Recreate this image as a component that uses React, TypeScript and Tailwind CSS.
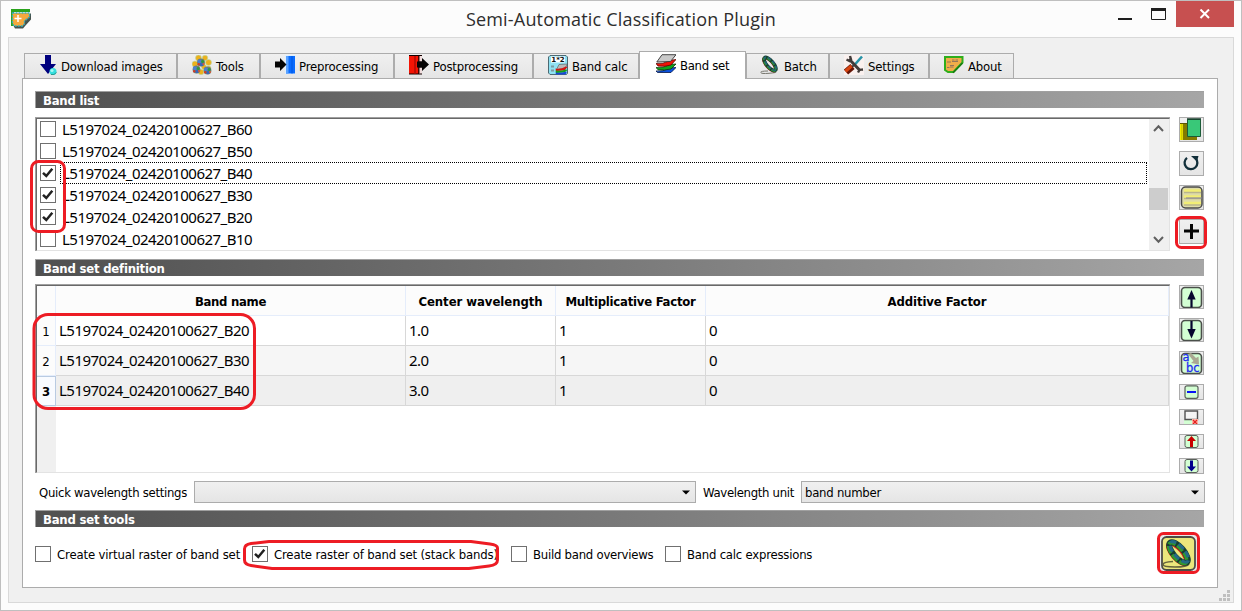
import type { ReactNode } from "react";

const ui = "font-['DejaVu_Sans_Condensed','DejaVu_Sans',sans-serif] text-[13px] leading-[16px] whitespace-nowrap";
const seg = "font-['Noto_Sans','Open_Sans',sans-serif] text-[15px] leading-[20px] tracking-[-0.52px] whitespace-nowrap";

function Svg({ w = 20, h = 20, children }: { w?: number; h?: number; children: ReactNode }) {
  return (
    <svg width={w} height={h} viewBox={`0 0 ${w} ${h}`} className="block shrink-0">
      {children}
    </svg>
  );
}

/* ---------- tab icons ---------- */

const AppIcon = () => (
  <Svg w={21} h={21}>
    <path d="M2 16l2 3.500h8l2.500-3 5.500-6V4l-8 8z" fill="#46524d" />
    <path d="M0 0h19v3H3v14H0z" fill="#2aa31c" />
    <path d="M1.500 4h17v4l-5 4v3l-2 2H3l-1.500-3z" fill="#f5a83c" stroke="#35aebb" strokeWidth="1.300" strokeDasharray="2 1" />
    <path d="M7 6v7M3.500 9.500h7" stroke="#fff" strokeWidth="1.500" />
  </Svg>
);

const DownloadIcon = () => (
  <Svg>
    <path d="M5 0h6v9h5l-8 10-8-10h5z" fill="#00007e" />
    <circle cx="13" cy="16.500" r="3.500" fill="#35dede" />
    <circle cx="12" cy="15.500" r="1.600" fill="#a5f8f2" />
    <path d="M11 19.500q3 1 5.500-2" stroke="#2a9a90" fill="none" />
  </Svg>
);

const Flower = ({ x, y }: { x: number; y: number }) => (
  <g transform={`translate(${x} ${y})`}>
    <circle r="3.900" fill="#6d7f70" />
    <circle cx="-1.500" cy="-1.300" r="2" fill="#4b7fd0" />
    <circle cx="1.600" cy="-1" r="1.500" fill="#2d9a3d" />
    <circle cx=".5" cy="2" r="1.800" fill="#3467be" />
    <circle cx="-2.300" cy="1.800" r="1.200" fill="#d23a28" />
    <circle cx="2.500" cy="1.500" r="1.100" fill="#d85a38" />
  </g>
);

const ToolsIcon = () => (
  <Svg>
    <g fill="#ecb11c" stroke="#b9dcb2" strokeWidth=".6">
      <circle cx="6.500" cy="3" r="3" />
      <circle cx="13" cy="3" r="2.800" />
      <circle cx="3" cy="9" r="3" />
      <circle cx="16.500" cy="7.500" r="3" />
      <circle cx="9" cy="17" r="2.800" />
      <circle cx="12" cy="12" r="2.500" />
      <circle cx="17" cy="13" r="2" />
    </g>
    <Flower x={9} y={7.500} />
    <Flower x={4.500} y={14.500} />
    <Flower x={15.500} y={15.500} />
  </Svg>
);

const PreIcon = () => (
  <Svg>
    <path d="M10 0h10v19H10z" fill="#dff0ff" />
    <path d="M11 1h9v17.500h-9z" fill="#0a6cff" />
    <path d="M11 1h2.500v17.500H11z" fill="#5aa2ff" />
    <path d="M16.500 1h1v17.500h-1z" fill="#0056e0" />
    <path d="M0 6.500h5V3l6.500 6.500L5 16v-3.500H0z" fill="#050505" />
  </Svg>
);

const PostIcon = () => (
  <Svg>
    <path d="M0 0h13v19.500H0z" fill="#120000" />
    <path d="M0 1h9v17.500H0z" fill="#f41404" />
    <path d="M5 1h2v17.500H5z" fill="#c20d04" />
    <path d="M10 1h3v5.500h-3zM10 12.500h3v6h-3z" fill="#f0dcdc" />
    <path d="M9 1h1.500v17.500H9z" fill="#4b0400" />
    <path d="M8 6.500h5V3l7 6.500-7 6.500v-3.500H8z" fill="#050505" />
  </Svg>
);

const CalcIcon = () => (
  <Svg>
    <path d="M2 .5h16l1.500 1.500v16.500l-1 1H2L.5 18V2z" fill="#8fe2f3" stroke="#4c6a73" />
    <path d="M3 1.500h14v6H3z" fill="#fff" />
    <text x="10" y="7" fontSize="7" fontWeight="700" textAnchor="middle" fontFamily="DejaVu Sans" fill="#111">1*2</text>
    <path d="M3 10.500h3v2H3zM3 14.500h3v2H3z" fill="#7e9aa2" />
    <path d="M11 9.500l8.500-.5-3 5-8 .5z" fill="#b9b9b9" stroke="#444" strokeWidth=".5" />
    <path d="M7.500 13.500q5 1 10.500-2l1.500.5-3 3.500-8.500.5z" fill="#d21410" />
    <path d="M7.500 15.500q5 1 10.500-1l1.500.5-3 2.500-8.500.5z" fill="#12a018" />
    <path d="M7.500 17.500q5 1 11-1v2l-2 1H8z" fill="#1746d8" />
  </Svg>
);

const BandSetIcon = () => (
  <Svg>
    <path d="M0 17q7 1 13.500-3l6.500-.5-5 5H1.500z" fill="#0b50dd" stroke="#061745" strokeWidth=".8" />
    <path d="M0 13.500q7 1 13.500-3L20 10l-5 5q-6 1.500-13 .8z" fill="#0fa31d" stroke="#073a0a" strokeWidth=".8" />
    <path d="M0 9.500q7 1 13.500-3L20 5.500 15 11q-6 2-13 1z" fill="#ef1309" stroke="#5a0502" strokeWidth=".8" />
    <path d="M6 .7h14L14.500 7.500.8 8z" fill="#c9c9c9" stroke="#333" strokeWidth=".9" />
  </Svg>
);

const BatchIcon = () => (
  <Svg>
    <path d="M8 16Q.5 16 .8 17.500T9 18.300t7-1.300" fill="none" stroke="#77776f" />
    <g transform="rotate(49 10 9)">
      <ellipse cx="10" cy="9.800" rx="8.300" ry="3.200" fill="none" stroke="#b8321f" strokeWidth="2.600" />
      <ellipse cx="10" cy="9" rx="8.300" ry="3.200" fill="none" stroke="#17402f" strokeWidth="3.600" />
      <ellipse cx="10" cy="9.400" rx="8.300" ry="3.200" fill="none" stroke="#2f8f35" strokeWidth="2" strokeDasharray="4 1.500" />
      <ellipse cx="10" cy="8.400" rx="8.300" ry="3.200" fill="none" stroke="#24607b" strokeWidth="1.600" strokeDasharray="3.500 2" />
    </g>
  </Svg>
);

const SettingsIcon = () => (
  <Svg>
    <path d="M0 0h20v20H0z" fill="#faf1ef" />
    <path d="M18 1.500l-8 9" stroke="#2794a8" strokeWidth="2.600" />
    <path d="M10.500 9.500l-4 4" stroke="#3c4747" strokeWidth="2" />
    <path d="M8.500 11.500L2 17" stroke="#651506" strokeWidth="6.500" />
    <path d="M7.500 11L1.500 16.200" stroke="#d94410" strokeWidth="3.200" />
    <path d="M5 4l11 11.500" stroke="#413b39" strokeWidth="3" />
    <path d="M2.500 4.500l3 1.500 1.500-1.500-1-3.500M14 17.500l1.500-2.500 3.500-.5" stroke="#413b39" strokeWidth="2.400" fill="none" />
    <circle cx="17.500" cy="17" r="1.300" fill="#faf1ef" />
  </Svg>
);

const AboutIcon = () => (
  <Svg>
    <path d="M1 2h17.500v5.500L9.500 17H4L1 15z" fill="#f0ad49" stroke="#2fae1c" strokeWidth="2" />
    <path d="M18.500 8L9 17.800" stroke="#187811" strokeWidth="1.500" />
    <path d="M3 7h4M8 5h2.500M11.500 5h2.500M8 6.500h6M3 12.500h2.500M6 10.500h4M6 12h3.500" stroke="#94765a" strokeWidth="1" />
  </Svg>
);

const tabs = [
  { label: "Download images", Icon: DownloadIcon, w: "w-[153px]", pad: "pl-[15px]", gap: "gap-[1px]" },
  { label: "Tools", Icon: ToolsIcon, w: "w-[83px]", pad: "pl-[14px]", gap: "gap-[4px]" },
  { label: "Preprocessing", Icon: PreIcon, w: "w-[134px]", pad: "pl-[14px]", gap: "gap-[4px]" },
  { label: "Postprocessing", Icon: PostIcon, w: "w-[139px]", pad: "pl-[14px]", gap: "gap-[4px]" },
  { label: "Band calc", Icon: CalcIcon, w: "w-[106px]", pad: "pl-[14px]", gap: "gap-[4px]" },
  { label: "Band set", Icon: BandSetIcon, w: "w-[107px]", pad: "pl-[16px]", gap: "gap-[4px]", selected: true },
  { label: "Batch", Icon: BatchIcon, w: "w-[83px]", pad: "pl-[13px]", gap: "gap-[4px]" },
  { label: "Settings", Icon: SettingsIcon, w: "w-[100px]", pad: "pl-[14px]", gap: "gap-[4px]" },
  { label: "About", Icon: AboutIcon, w: "w-[85px]", pad: "pl-[14px]", gap: "gap-[4px]" },
];

function TabBar() {
  return (
    <div className="flex h-[27px] items-end pl-[2px]">
      {tabs.map(({ label, Icon, w, pad, gap, selected }) =>
        selected ? (
          <div key={label} className={`${w} ${pad} ${gap} relative z-10 -mb-px flex h-[28px] shrink-0 items-start border border-b-0 border-[#acacac] bg-white pt-[2px]`}>
            <Icon />
            <span className={`${ui} pt-[4px] tracking-[-0.3px]`}>{label}</span>
          </div>
        ) : (
          <div key={label} className={`${w} ${pad} ${gap} flex h-[25px] shrink-0 items-start border border-b-0 border-[#acacac] bg-linear-to-b from-[#f0f0f0] to-[#e5e5e5] pt-[1px]`}>
            <Icon />
            <span className={`${ui} pt-[4px] tracking-[-0.18px]`}>{label}</span>
          </div>
        ),
      )}
    </div>
  );
}

function SectionBar({ title }: { title: string }) {
  return (
    <div className="flex h-[17px] w-[1169px] items-center border-t border-l border-[#a0a0a0] bg-linear-to-r from-[#505050] to-[#a6a6a6] pl-[7px]">
      <span className={`${ui} pt-[2px] font-bold tracking-[-0.22px] text-white`}>{title}</span>
    </div>
  );
}

function Check({ on = false }: { on?: boolean }) {
  return (
    <span className="flex size-[16px] shrink-0 items-center justify-center border border-[#707070] bg-white">
      {on && (
        <svg width="14" height="14" viewBox="0 0 14 14">
          <path d="M2 6.800l3.300 3.200 6-7.200" fill="none" stroke="#212121" strokeWidth="2.500" />
        </svg>
      )}
    </span>
  );
}

const bands = [
  ["L5197024_02420100627_B60", false],
  ["L5197024_02420100627_B50", false],
  ["L5197024_02420100627_B40", true],
  ["L5197024_02420100627_B30", true],
  ["L5197024_02420100627_B20", true],
  ["L5197024_02420100627_B10", false],
] as const;

function BandList() {
  return (
    <div className="h-[134px] w-[1135px] border-t border-l border-t-[#a0a0a0] border-l-[#a0a0a0]">
      <div className="flex h-[133px] border border-t-[#696969] border-r-[#e3e3e3] border-b-[#e3e3e3] border-l-[#696969]">
        <div className="w-[1112px] shrink-0 overflow-hidden pr-[2px]">
          {bands.map(([name, on], i) => (
            <div key={name} className={`flex h-[22px] items-center pl-[3px] ${i === 0 ? "-mt-px" : ""}`}>
              <span className="-mt-px">
                <Check on={on} />
              </span>
              <div className={`ml-[4px] flex h-[22px] flex-1 items-center border border-dotted pl-[1px] ${i === 2 ? "border-black" : "border-transparent"}`}>
                <span className={seg}>{name}</span>
              </div>
            </div>
          ))}
        </div>
        <div className="w-[20px] shrink-0 bg-[#f0f0f0]">
          <svg width="20" height="131" viewBox="0 0 20 131" className="block">
            <path d="M0 69h19v22H0z" fill="#cdcdcd" />
            <path d="M5 12l4.500-4.800L14 12M5 118l4.500 4.800L14 118" fill="none" stroke="#606060" strokeWidth="2" />
          </svg>
        </div>
      </div>
    </div>
  );
}

function Btn({ h, children }: { h: string; children: ReactNode }) {
  return (
    <div className={`${h} flex w-[25px] shrink-0 items-center justify-center overflow-hidden border border-[#acacac] bg-linear-to-b from-[#f0f0f0] to-[#e5e5e5]`}>
      {children}
    </div>
  );
}

function ListButtons() {
  return (
    <div className="flex flex-col gap-[9px]">
      <Btn h="h-[25px]">
        <Svg w={23} h={23}>
          <path d="M0 5h8v17H0z" fill="#837b00" />
          <path d="M0 5h3v17H0z" fill="#f3ed00" />
          <path d="M1.500 6h.8v16h-.8z" fill="#b5ae00" />
          <path d="M7 18h10v4H7z" fill="#837b00" />
          <path d="M0 5.500h7" stroke="#5d5700" />
          <path d="M7.500 1.500h13v17h-13z" fill="#39c878" stroke="#1c5b38" />
          <path d="M7 1h14" stroke="#173f2c" strokeWidth="1.500" />
        </Svg>
      </Btn>
      <Btn h="h-[25px]">
        <Svg w={23} h={23}>
          <path d="M7 5.800A6.400 6.400 0 1 0 15.500 6.300" fill="none" stroke="#12303b" strokeWidth="2.300" />
          <path d="M11 4h7.500L17 9.500z" fill="#12303b" />
        </Svg>
      </Btn>
      <Btn h="h-[25px]">
        <Svg w={23} h={23}>
          <rect x="1.500" y="1" width="20.500" height="21" rx="4" fill="#dfdca8" stroke="#4a4a4a" strokeWidth="1.500" />
          <path d="M4 5.500h17M4 11.500h17M4 18h17" stroke="#b9b48d" strokeWidth="3.600" />
          <path d="M4 4.500h17M4 10.500h17M4 17h17" stroke="#f2ee75" strokeWidth="2.500" />
          <path d="M6 12h16" stroke="#87839a" />
        </Svg>
      </Btn>
      <Btn h="h-[25px]">
        <Svg w={23} h={23}>
          <path d="M11.500 4v15M4 11h15" stroke="#050505" strokeWidth="3" />
        </Svg>
      </Btn>
    </div>
  );
}

const RoundBox = () => <rect x="1.500" y="1.500" width="20" height="20" rx="3.500" fill="#d3ffd3" stroke="#4a4f4a" strokeWidth="1.600" />;

function TableButtons() {
  return (
    <div className="flex flex-col">
      <Btn h="h-[24px] mb-[9px]">
        <Svg w={23} h={23}>
          <RoundBox />
          <path d="M11.500 4l4.200 9.500H7.300z" fill="#06062e" />
          <path d="M11.500 11v10.500" stroke="#06062e" strokeWidth="2.200" />
        </Svg>
      </Btn>
      <Btn h="h-[24px] mb-[9px]">
        <Svg w={23} h={23}>
          <RoundBox />
          <path d="M11.500 19.500l4.200-9.500H7.300z" fill="#06062e" />
          <path d="M11.500 2v10" stroke="#06062e" strokeWidth="2.200" />
        </Svg>
      </Btn>
      <Btn h="h-[24px] mb-[9px]">
        <Svg w={23} h={23}>
          <RoundBox />
          <path d="M8 2l3-1 5 5 2.500-1.500.5 8-8-1.500L13.500 9z" fill="#aaa792" />
          <text fontSize="11.500" fontFamily="DejaVu Sans" fill="#1f2cf0" stroke="#1f2cf0" strokeWidth=".3">
            <tspan x="2.500" y="9">a</tspan>
            <tspan x="6" y="19.500">bc</tspan>
          </text>
        </Svg>
      </Btn>
      <Btn h="h-[16px] mb-[9px]">
        <Svg w={23} h={14}>
          <rect x="5" y=".8" width="13" height="12.500" rx="2" fill="#d3ffd3" stroke="#596059" strokeWidth="1.200" />
          <path d="M7 7h9" stroke="#0a14f5" strokeWidth="2" />
        </Svg>
      </Btn>
      <Btn h="h-[16px] mb-[9px]">
        <Svg w={23} h={14}>
          <path d="M4 10h9v4H4z" fill="#d3ffd3" />
          <path d="M5 1h12.500v8.500H5z" fill="#f4f4f4" stroke="#515151" strokeWidth="1.400" />
          <path d="M12 9h6v5h-6z" fill="#ffb4a4" />
          <path d="M13 10l4 4M17 10l-4 4" stroke="#e52020" strokeWidth="1.200" />
        </Svg>
      </Btn>
      <Btn h="h-[15px] mb-[9px]">
        <Svg w={23} h={13}>
          <rect x="5" y=".5" width="13" height="12" rx="2" fill="#d3ffd3" stroke="#596059" />
          <path d="M11.500 1l4.500 5h-3v6h-3V6H7z" fill="#c90000" />
        </Svg>
      </Btn>
      <Btn h="h-[16px]">
        <Svg w={23} h={14}>
          <rect x="5" y=".5" width="13" height="13" rx="2" fill="#d3ffd3" stroke="#596059" />
          <path d="M11.500 12.500L7 7.500h3v-6h3v6h3z" fill="#00008c" />
        </Svg>
      </Btn>
    </div>
  );
}

const rows = [
  ["L5197024_02420100627_B20", "1.0", "1", "0"],
  ["L5197024_02420100627_B30", "2.0", "1", "0"],
  ["L5197024_02420100627_B40", "3.0", "1", "0"],
];
const rowBg = ["bg-white", "bg-[#f6f6f6]", "bg-[#efefef]"];
const cols = "grid grid-cols-[19px_350px_150px_150px_463px]";
const headers = [
  ["", ""],
  ["Band name", "tracking-[-0.3px]"],
  ["Center wavelength", "tracking-[-0.05px]"],
  ["Multiplicative Factor", "tracking-[-0.25px]"],
  ["Additive Factor", "tracking-[-0.1px]"],
];

function BandTable() {
  return (
    <div className="h-[189px] w-[1135px] border-t border-l border-[#a0a0a0]">
      <div className="h-[188px] border border-t-[#696969] border-r-[#e3e3e3] border-b-[#e3e3e3] border-l-[#696969]">
        <div className={`${cols} h-[30px]`}>
          {headers.map(([h, track], i) => (
            <div key={i} className="flex items-center justify-center border-r border-b border-[#e5edfb] bg-[#fcfcfc]">
              <span className={`${ui} ${track} pt-[2px] font-bold`}>{h}</span>
            </div>
          ))}
        </div>
        {rows.map((r, i) => (
          <div key={i} className={`${cols} h-[30px] ${rowBg[i]}`}>
            <div className={`flex items-center justify-center border-r border-b ${i === 2 ? "border-t border-[#b9cbe2] bg-[#f9fbff]" : "border-[#e5edfb] bg-[#fcfcfc]"}`}>
              <span className={`${ui} ${i === 2 ? "pt-[1px] font-bold" : "pt-[2px] text-[12px]"}`}>{i + 1}</span>
            </div>
            {r.map((c, j) => (
              <div key={j} className="flex items-center border-r border-b border-[#d8d8d8] pb-[1px] pl-[3px]">
                <span className={seg}>{c}</span>
              </div>
            ))}
          </div>
        ))}
        <div className="h-[66px] w-[19px] bg-[#f0f0f0]" />
      </div>
    </div>
  );
}

function Combo({ value, w }: { value: string; w: string }) {
  return (
    <div className={`${w} flex h-[22px] items-center justify-between border border-[#acacac] bg-linear-to-b from-[#f0f0f0] to-[#e5e5e5] pr-[5px] pl-[3px]`}>
      <span className={`${ui} pt-[2px] tracking-[-0.25px]`}>{value}</span>
      <svg width="8" height="5" viewBox="0 0 8 5">
        <path d="M0 .5h8L4 4.500z" fill="#000" />
      </svg>
    </div>
  );
}

function Option({ label, on, w, track }: { label: string; on?: boolean; w: string; track: string }) {
  return (
    <div className={`${w} flex h-[16px] items-center gap-[6px]`}>
      <Check on={on} />
      <span className={`${ui} ${track} pt-[2px]`}>{label}</span>
    </div>
  );
}

const RunIcon = () => (
  <svg width="37" height="37" viewBox="0 0 37 37" className="block">
    <path d="M0 0h37v37H0z" fill="#e8e8e8" />
    <rect x="2" y="2" width="33" height="33" rx="4.500" fill="#ebe77c" stroke="#4c4c46" strokeWidth="1.800" />
    <path d="M13 26.500Q3 27 3 29.500T15 32t14-3" fill="none" stroke="#65633c" strokeWidth="1.600" />
    <g transform="rotate(49 18.500 17.500)">
      <ellipse cx="18.500" cy="19.300" rx="12.800" ry="4.800" fill="none" stroke="#d02b19" strokeWidth="4" />
      <ellipse cx="18.500" cy="17.500" rx="12.800" ry="5.200" fill="none" stroke="#153d33" strokeWidth="6" />
      <ellipse cx="18.500" cy="18.600" rx="12.800" ry="5.200" fill="none" stroke="#339a2b" strokeWidth="3.400" strokeDasharray="7.500 2" />
      <ellipse cx="18.500" cy="16.600" rx="12.800" ry="5.200" fill="none" stroke="#246a86" strokeWidth="3.200" strokeDasharray="6.500 3" />
    </g>
  </svg>
);

function TitleBar() {
  return (
    <div className="flex h-[36px] justify-between">
      <div className="w-[123px] pt-[8px] pl-[10px]">
        <AppIcon />
      </div>
      <div className="pt-[6px] font-['Open_Sans','Noto_Sans',sans-serif] text-[18px] leading-[25px] tracking-[0.18px] text-[#2d2d2d]">
        Semi-Automatic Classification Plugin
      </div>
      <div className="mr-[7px] flex h-[26px] w-[116px]">
        <svg width="58" height="26" viewBox="0 0 58 26">
          <path d="M0 17h14v2H0z" fill="#1e1e1e" />
          <path d="M33.500 8.500h14v10h-14z" fill="none" stroke="#1e1e1e" />
          <path d="M33 7h15v3H33z" fill="#1e1e1e" />
        </svg>
        <div className="flex w-[58px] items-center justify-center bg-[#c75050]">
          <svg width="12" height="10" viewBox="0 0 12 10">
            <path d="M1.500 .5l8.500 8.500M10 .5L1.500 9" stroke="#fff" strokeWidth="2" />
          </svg>
        </div>
      </div>
    </div>
  );
}

function Annotations() {
  return (
    <svg width="1242" height="611" viewBox="0 0 1242 611" className="pointer-events-none absolute -top-px -left-px z-20" fill="none" stroke="#ed1c24" strokeWidth="3">
      <rect x="31.500" y="161.500" width="33" height="70" rx="7" />
      <rect x="34" y="314.500" width="220.500" height="94" rx="14" />
      <rect x="1176.500" y="217.500" width="29" height="30" rx="5" />
      <rect x="1158.500" y="533.500" width="40" height="39" rx="5" />
      <path d="M269 541.500H471L490 544Q497.500 545 497.500 548V560Q497.500 565 489 566L469 568.500H272L251 565.500Q244.500 564.500 244.500 560V549Q244.500 544.500 251 543.500Z" />
    </svg>
  );
}

export default function App() {
  return (
    <div className="relative h-[611px] w-[1242px] overflow-hidden border border-[#bfbfbf] bg-[#fcfcfc] text-black">
      <TitleBar />
      <div className="ml-[7px] h-[566px] w-[1226px] border border-[#d9d9d9] bg-[#f0f0f0] pt-[13px] pl-[13px]">
        <TabBar />
        <div className="flex h-[510px] w-[1196px] flex-col border border-[#acacac] bg-white pt-[12px] pl-[12px]">
          <SectionBar title="Band list" />
          <div className="mt-[9px] flex gap-[9px]">
            <BandList />
            <ListButtons />
          </div>
          <div className="mt-[8px]">
            <SectionBar title="Band set definition" />
          </div>
          <div className="mt-[8px] flex gap-[9px]">
            <BandTable />
            <div className="pt-[1px]">
              <TableButtons />
            </div>
          </div>
          <div className="mt-[7px] flex items-center pl-[4px]">
            <span className={`${ui} w-[155px] pt-[2px] tracking-[-0.29px]`}>Quick wavelength settings</span>
            <Combo value="" w="w-[502px]" />
            <span className={`${ui} ml-[7px] w-[98px] pt-[2px] tracking-[-0.31px]`}>Wavelength unit</span>
            <Combo value="band number" w="w-[404px]" />
          </div>
          <div className="mt-[7px]">
            <SectionBar title="Band set tools" />
          </div>
          <div className="mt-[7px] flex">
            <div className="flex pt-[12px]">
              <Option label="Create virtual raster of band set" w="w-[217px]" track="tracking-[-0.15px]" />
              <Option label="Create raster of band set (stack bands)" on w="w-[259px]" track="tracking-[-0.16px]" />
              <Option label="Build band overviews" w="w-[154px]" track="tracking-[-0.25px]" />
              <Option label="Band calc expressions" w="w-[160px]" track="tracking-[-0.22px]" />
            </div>
            <div className="ml-[335px] pt-[1px]">
              <RunIcon />
            </div>
          </div>
        </div>
        <svg width="11" height="11" viewBox="0 0 11 11" className="mt-[2px] ml-[1197px] block" fill="#bfbfbf">
          <path d="M8 0h3v3H8zM4 4h3v3H4zM8 4h3v3H8zM0 8h3v3H0zM4 8h3v3H4zM8 8h3v3H8z" />
        </svg>
      </div>
      <Annotations />
    </div>
  );
}
